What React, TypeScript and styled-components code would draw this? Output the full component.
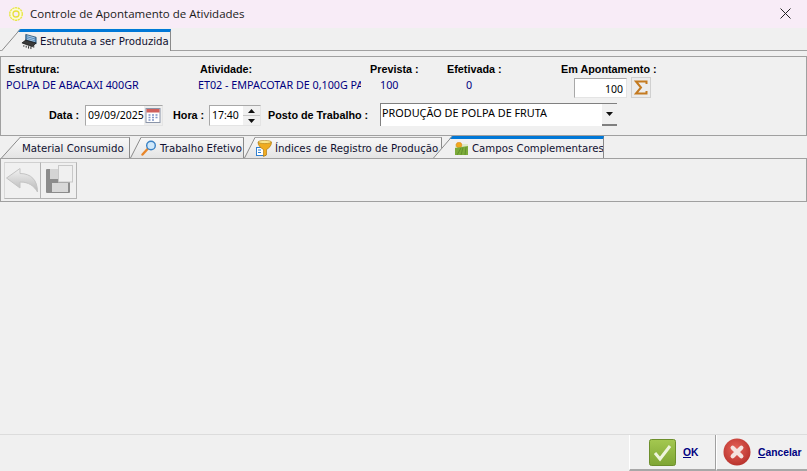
import React, { FunctionComponent, ReactNode } from "react"
import styled, { createGlobalStyle } from "styled-components"

const GlobalStyle = createGlobalStyle`
  html, body {
    margin: 0;
    padding: 0;
    background: #f0f0f0;
  }
  body {
    font-family: "Noto Sans", "DejaVu Sans", sans-serif;
    font-size: 10.5px;
    color: #000;
  }
`

const Window = styled.div`
  width: 807px;
  height: 471px;
  display: flex;
  flex-direction: column;
  overflow: hidden;
  background: #f0f0f0;
`

const TitleBar = styled.div`
  height: 28px;
  flex: none;
  box-sizing: border-box;
  display: flex;
  align-items: center;
  padding: 0 16px 1px 8px;
  background: #f8ecf7;
`

const TitleText = styled.div`
  margin-left: 6px;
  flex: 1;
  font-family: "Open Sans", sans-serif;
  font-size: 11.5px;
  color: #1a1a1a;
`

const TabStrip = styled.div`
  height: 22px;
  flex: none;
  display: flex;
  align-items: flex-end;
  padding-left: 1px;
`

const TopTabStrip = styled(TabStrip)`
  height: 23px;
  box-sizing: border-box;
  border-bottom: 1px solid #a0a0a0;

  & > div {
    margin-bottom: -1px;
  }
`

const Tab = styled.div<{ $width: number; $active?: boolean; $slant: number; $pad: number; $gap: number }>`
  position: relative;
  width: ${(p) => p.$width}px;
  height: ${(p) => (p.$active ? 22 : 21)}px;
  flex: none;
  box-sizing: border-box;
  display: flex;
  align-items: center;
  gap: ${(p) => p.$gap}px;
  padding-left: ${(p) => p.$pad}px;
  white-space: nowrap;
  overflow: hidden;
  color: #101030;
  font-family: "DejaVu Sans", sans-serif;
  font-size: 10.2px;
  border-right: 1px solid #8a8a8a;
  border-top: ${(p) => (p.$active ? "3px solid #0078d7" : "1px solid #a8a8a8")};
  background: ${(p) =>
    p.$active ? "#f0f0f0" : "linear-gradient(#f8f8f8, #e4e4e4)"};
  clip-path: polygon(${(p) => p.$slant}px 0, 100% 0, 100% 100%, 0 100%);

  svg {
    flex: none;
  }
`

const Slant = styled.svg`
  position: absolute;
  left: 0;
  bottom: 0;
`

const TabEdge = styled.div<{ $overlap: number }>`
  position: relative;
  margin-left: -${(p) => p.$overlap}px;
`

const HeaderPanel = styled.div`
  height: 80px;
  flex: none;
  margin-top: 5px;
  box-sizing: border-box;
  border: 1px solid #a0a0a0;
  padding: 6px 0 0 5px;
  display: flex;
  flex-direction: column;
`

const InfoGrid = styled.div`
  height: 37px;
  flex: none;
  display: grid;
  grid-template-columns: 192px 172px 77px 114px 1fr;
`

const InfoColumn = styled.div`
  display: flex;
  flex-direction: column;
  gap: 3px;
`

const FieldLabel = styled.div<{ $indent?: number }>`
  padding-left: ${(p) => p.$indent ?? 0}px;
  height: 13px;
  line-height: 13px;
  font-weight: bold;
  font-family: "Liberation Sans", sans-serif;
  font-size: 10.8px;
  white-space: nowrap;
`

const InfoValue = styled.div<{ $indent?: number; $width?: number }>`
  padding-left: ${(p) => p.$indent ?? 0}px;
  width: ${(p) => (p.$width ? `${p.$width}px` : "auto")};
  height: 13px;
  line-height: 13px;
  font-size: 10.75px;
  color: #000080;
  white-space: nowrap;
  overflow: hidden;
`

const ApontamentoRow = styled.div`
  display: flex;
  align-items: center;
  gap: 4px;
  margin: -2px 0 0 13px;
`

const NumberInput = styled.div`
  width: 53px;
  height: 20px;
  box-sizing: border-box;
  border: 1px solid #a8a8a8;
  border-right-color: #e4e4e4;
  border-bottom-color: #e4e4e4;
  background: #fff;
  text-align: right;
  padding-right: 3px;
  line-height: 20px;
  font-size: 10.5px;
`

const SigmaButton = styled.div`
  width: 20px;
  height: 21px;
  box-sizing: border-box;
  border: 1px solid #d0d0d0;
  background: #ececec;
  display: flex;
  align-items: center;
  justify-content: center;
`

const FormRow = styled.div`
  display: flex;
  align-items: flex-start;
  margin-top: 3px;
`

const FormLabel = styled.div<{ $left: number; $width: number }>`
  margin: 2px 0 0 ${(p) => p.$left}px;
  width: ${(p) => p.$width}px;
  height: 21px;
  line-height: 21px;
  flex: none;
  font-weight: bold;
  font-family: "Liberation Sans", sans-serif;
  font-size: 10.8px;
  white-space: nowrap;
`

const TextBox = styled.div<{ $width: number }>`
  width: ${(p) => p.$width}px;
  height: 21px;
  margin-top: 2px;
  flex: none;
  box-sizing: border-box;
  border: 1px solid #a8a8a8;
  border-right-color: #e4e4e4;
  border-bottom-color: #e4e4e4;
  background: #fff;
  display: flex;
  align-items: center;
  padding-left: 2px;
  overflow: hidden;
`

const BoxText = styled.span`
  flex: 1;
  line-height: 15px;
  white-space: nowrap;
  overflow: hidden;
`

const CalendarButton = styled.div`
  width: 18px;
  height: 19px;
  flex: none;
  display: flex;
  align-items: center;
  justify-content: center;
  background: #eeeeee;
`

const Spinner = styled.div`
  width: 17px;
  height: 19px;
  flex: none;
  display: flex;
  flex-direction: column;
  background: #f0f0f0;
`

const SpinPart = styled.div`
  flex: 1;
  display: flex;
  align-items: center;
  justify-content: center;

  & + & {
    border-top: 1px solid #c8c8c8;
  }
`

const SelectBox = styled.div`
  width: 237px;
  height: 23px;
  flex: none;
  box-sizing: border-box;
  border-top: 1px solid #808080;
  border-left: 1px solid #808080;
  background: #fff;
  display: flex;
  align-items: flex-start;
  padding: 1px 0 0 1px;
  font-size: 10.85px;
`

const SelectArrow = styled.div`
  width: 15px;
  height: 22px;
  margin-top: -1px;
  flex: none;
  box-sizing: border-box;
  background: #f0f0f0;
  border-bottom: 2px solid #808080;
  display: flex;
  align-items: center;
  justify-content: center;
`

const Toolbar = styled.div`
  height: 44px;
  flex: none;
  box-sizing: border-box;
  border: 1px solid #a0a0a0;
  padding: 3px 0 0 3px;
  display: flex;
  align-items: flex-start;
`

const ToolButton = styled.div<{ $first?: boolean }>`
  width: ${(p) => (p.$first ? 37 : 36)}px;
  height: 37px;
  box-sizing: border-box;
  border: 1px solid #b4b4b4;
  border-left: ${(p) => (p.$first ? "1px solid #d8d8d8" : "none")};
  border-top-color: #d0d0d0;
  display: flex;
  align-items: center;
  justify-content: center;
`

const Body = styled.div`
  flex: 1;
`

const Footer = styled.div`
  height: 37px;
  flex: none;
  display: flex;
  justify-content: flex-end;
  box-sizing: border-box;
  border-top: 1px solid #dcdcdc;
`

const FooterButton = styled.div<{ $width: number; $pad: number; $last?: boolean }>`
  width: ${(p) => p.$width}px;
  box-sizing: border-box;
  display: flex;
  align-items: center;
  gap: 7px;
  padding-left: ${(p) => p.$pad}px;
  border-left: 1px solid #fff;
  border-right: ${(p) => (p.$last ? "none" : "1px solid #a0a0a0")};
  border-bottom: 2px solid #a8a8a8;
  font-family: "Liberation Sans", sans-serif;
  font-weight: bold;
  font-size: 10.3px;
  color: #000080;
`

const Hotkey = styled.span`
  text-decoration: underline;
`

const GearIcon = () => (
  <svg width="16" height="16" viewBox="0 0 16 16">
    <circle cx="8" cy="8" r="6.3" fill="#fdfbd8" stroke="#e8e64a" strokeWidth="1.4" strokeDasharray="2.2 0.6" />
    <circle cx="8" cy="8" r="3" fill="#f8ecf7" stroke="#e6e03a" strokeWidth="1.3" />
  </svg>
)

const CloseIcon = () => (
  <svg width="11" height="11" viewBox="0 0 11 11">
    <path d="M0.5 0.5L10.5 10.5M10.5 0.5L0.5 10.5" stroke="#222" strokeWidth="1" fill="none" />
  </svg>
)

const ChipIcon = () => (
  <svg width="17" height="17" viewBox="0 0 18 17">
    <path d="M5 1L16 4V11L5 8Z" fill="#4f86b8" stroke="#26506f" strokeWidth="0.8" />
    <path d="M6.5 2.5L14.5 4.7M6.5 4.5L14.5 6.7M6.5 6.3L14.5 8.5" stroke="#c4dcef" strokeWidth="0.8" />
    <path d="M1 10L5 7L16 10L12 14Z" fill="#3a3a3a" stroke="#111" strokeWidth="0.7" />
    <path d="M3 12.5V14M5.5 13V15M8 13.5V16M10.5 14V16.5M13.5 12.5V15" stroke="#222" strokeWidth="1" />
  </svg>
)

const LensIcon = () => (
  <svg width="16" height="16" viewBox="0 0 16 16">
    <path d="M1.5 14.5L7 8.5" stroke="#e8862a" strokeWidth="2.4" strokeLinecap="round" />
    <circle cx="10" cy="5.5" r="4.3" fill="#cfe8fa" stroke="#3b82c4" strokeWidth="1.4" />
  </svg>
)

const FunnelIcon = () => (
  <svg width="16" height="17" viewBox="0 0 16 17">
    <rect x="0.5" y="7.5" width="9" height="8" fill="#fff" stroke="#2f7fd0" />
    <path d="M2 10H5M2 12.5H5" stroke="#2f7fd0" strokeWidth="1" />
    <path d="M2 2C2 6 5 8 7.5 9.5V16.5L10.5 15V9.5C13 8 15.5 6 15.5 2Z" fill="#f0ac20" stroke="#b07a10" strokeWidth="0.7" />
    <ellipse cx="8.7" cy="2" rx="6.6" ry="1.6" fill="#fbe58a" stroke="#b07a10" strokeWidth="0.6" />
  </svg>
)

const FieldIcon = () => (
  <svg width="13" height="13" viewBox="0 0 13 13">
    <rect x="0" y="2" width="13" height="5" fill="#dfe8c8" />
    <circle cx="4" cy="3" r="2.8" fill="#f2a81c" stroke="#d9801a" strokeWidth="0.5" />
    <path d="M0 6L13 4V13H0Z" fill="#7cab3a" />
    <path d="M2 13L6 6M6 13L8 5.5M10 13L11 5" stroke="#5b8a28" strokeWidth="0.8" />
  </svg>
)

const SigmaIcon = () => (
  <svg width="14" height="15" viewBox="0 0 14 15">
    <path d="M12.5 4V1.5H2L7 7.5L2 13.5H12.5V11" fill="none" stroke="#c47a20" strokeWidth="2" />
  </svg>
)

const CalendarIcon = () => (
  <svg width="16" height="15" viewBox="0 0 15 15">
    <rect x="0.5" y="0.5" width="14" height="14" fill="#fff" stroke="#8a94a8" />
    <rect x="1" y="1" width="13" height="3.5" fill="#d0605c" />
    <path d="M3 7H5M6.5 7H8.5M10 7H12M3 9.5H5M6.5 9.5H8.5M10 9.5H12M3 12H5M6.5 12H8.5" stroke="#7f94c8" strokeWidth="1.3" />
  </svg>
)

const BackIcon = () => (
  <svg width="35" height="35" viewBox="0 0 35 35">
    <defs>
      <linearGradient id="backFill" x1="0" y1="0" x2="0" y2="1">
        <stop offset="0" stopColor="#f2f2f2" />
        <stop offset="1" stopColor="#b8b8b8" />
      </linearGradient>
    </defs>
    <path d="M1.5 15L15 5.5V10.5C26 10.5 32.5 17 32.5 29C29 23 24 19 15 19V25Z" fill="url(#backFill)" stroke="#c4c4c4" />
  </svg>
)

const FloppyIcon = () => (
  <svg width="35" height="35" viewBox="0 0 35 35">
    <path d="M5 7Q5 6 6 6H29V29Q29 30 28 30H6Q5 30 5 29Z" fill="#8c8c8c" />
    <rect x="9" y="6" width="9" height="10" fill="#d4d4d4" />
    <rect x="11" y="20" width="16" height="9" fill="#d8d8d8" />
    <rect x="17.5" y="2.5" width="14" height="16.5" fill="#f0f0f0" stroke="#c8c8c8" />
  </svg>
)

const OkIcon = () => (
  <svg width="27" height="27" viewBox="0 0 27 27">
    <defs>
      <linearGradient id="okFill" x1="0" y1="0" x2="0" y2="1">
        <stop offset="0" stopColor="#a4c850" />
        <stop offset="1" stopColor="#7ea534" />
      </linearGradient>
    </defs>
    <rect x="0.5" y="0.5" width="26" height="26" rx="2" fill="url(#okFill)" stroke="#6d8f2c" />
    <path d="M6 14L11 20L21 7" fill="none" stroke="#eef4dc" strokeWidth="3" />
  </svg>
)

const CancelIcon = () => (
  <svg width="28" height="28" viewBox="0 0 29 29">
    <defs>
      <radialGradient id="cancelFill" cx="0.45" cy="0.4" r="0.65">
        <stop offset="0" stopColor="#e8655a" />
        <stop offset="1" stopColor="#b52f2a" />
      </radialGradient>
    </defs>
    <circle cx="14.5" cy="14.5" r="14" fill="url(#cancelFill)" />
    <path d="M10 10L19 19M19 10L10 19" stroke="#f4e4e0" strokeWidth="4.4" strokeLinecap="round" />
  </svg>
)

const Triangle = ({ up }: { up?: boolean }) => (
  <svg width="7" height="4" viewBox="0 0 7 4">
    <path d={up ? "M3.5 0L7 4H0Z" : "M0 0H7L3.5 4Z"} fill="#111" />
  </svg>
)

type FolderTabProps = {
  width: number
  slant: number
  pad: number
  gap?: number
  overlap?: number
  active?: boolean
  icon?: ReactNode
  children: ReactNode
}

const FolderTab: FunctionComponent<FolderTabProps> = ({ width, slant, pad, gap = 3, overlap = 0, active, icon, children }) => {
  const h = active ? 22 : 21
  return (
    <TabEdge $overlap={overlap}>
      <Tab $width={width} $slant={slant} $pad={pad} $gap={gap} $active={active}>
        {icon}
        <span>{children}</span>
      </Tab>
      <Slant width={slant + 1} height={h}>
        <path d={`M0.5 ${h}L${slant} 0.5`} stroke="#8a8a8a" fill="none" />
      </Slant>
    </TabEdge>
  )
}

const App: FunctionComponent = () => {
  return (
    <Window>
      <GlobalStyle />
      <TitleBar>
        <GearIcon />
        <TitleText>Controle de Apontamento de Atividades</TitleText>
        <CloseIcon />
      </TitleBar>
      <TopTabStrip>
        <FolderTab width={170} slant={19} pad={20} gap={2} active icon={<ChipIcon />}>
          Estrututa a ser Produzida
        </FolderTab>
      </TopTabStrip>
      <HeaderPanel>
        <InfoGrid>
          <InfoColumn>
            <FieldLabel $indent={2}>Estrutura:</FieldLabel>
            <InfoValue>POLPA DE ABACAXI 400GR</InfoValue>
          </InfoColumn>
          <InfoColumn>
            <FieldLabel $indent={2}>Atividade:</FieldLabel>
            <InfoValue $width={163}>ET02 - EMPACOTAR DE 0,100G PA</InfoValue>
          </InfoColumn>
          <InfoColumn>
            <FieldLabel>Prevista :</FieldLabel>
            <InfoValue $indent={10}>100</InfoValue>
          </InfoColumn>
          <InfoColumn>
            <FieldLabel>Efetivada :</FieldLabel>
            <InfoValue $indent={19}>0</InfoValue>
          </InfoColumn>
          <InfoColumn>
            <FieldLabel>Em Apontamento :</FieldLabel>
            <ApontamentoRow>
              <NumberInput>100</NumberInput>
              <SigmaButton>
                <SigmaIcon />
              </SigmaButton>
            </ApontamentoRow>
          </InfoColumn>
        </InfoGrid>
        <FormRow>
          <FormLabel $left={43} $width={36}>Data :</FormLabel>
          <TextBox $width={78}>
            <BoxText>09/09/2025</BoxText>
            <CalendarButton>
              <CalendarIcon />
            </CalendarButton>
          </TextBox>
          <FormLabel $left={10} $width={36}>Hora :</FormLabel>
          <TextBox $width={52}>
            <BoxText>17:40</BoxText>
            <Spinner>
              <SpinPart>
                <Triangle up />
              </SpinPart>
              <SpinPart>
                <Triangle />
              </SpinPart>
            </Spinner>
          </TextBox>
          <FormLabel $left={7} $width={112}>Posto de Trabalho :</FormLabel>
          <SelectBox>
            <BoxText>PRODUÇÃO DE POLPA DE FRUTA</BoxText>
            <SelectArrow>
              <Triangle />
            </SelectArrow>
          </SelectBox>
        </FormRow>
      </HeaderPanel>
      <TabStrip>
        <FolderTab width={129} slant={19} pad={21}>Material Consumido</FolderTab>
        <FolderTab width={114} slant={11} pad={11} icon={<LensIcon />}>Trabalho Efetivo</FolderTab>
        <FolderTab width={198} slant={11} pad={12} icon={<FunnelIcon />}>Índices de Registro de Produção</FolderTab>
        <FolderTab width={171} slant={19} pad={22} gap={4} active overlap={9} icon={<FieldIcon />}>Campos Complementares</FolderTab>
      </TabStrip>
      <Toolbar>
        <ToolButton $first>
          <BackIcon />
        </ToolButton>
        <ToolButton>
          <FloppyIcon />
        </ToolButton>
      </Toolbar>
      <Body />
      <Footer>
        <FooterButton $width={87} $pad={19}>
          <OkIcon />
          <span>
            <Hotkey>O</Hotkey>K
          </span>
        </FooterButton>
        <FooterButton $width={91} $pad={6} $last>
          <CancelIcon />
          <span>
            <Hotkey>C</Hotkey>ancelar
          </span>
        </FooterButton>
      </Footer>
    </Window>
  )
}

export default App
